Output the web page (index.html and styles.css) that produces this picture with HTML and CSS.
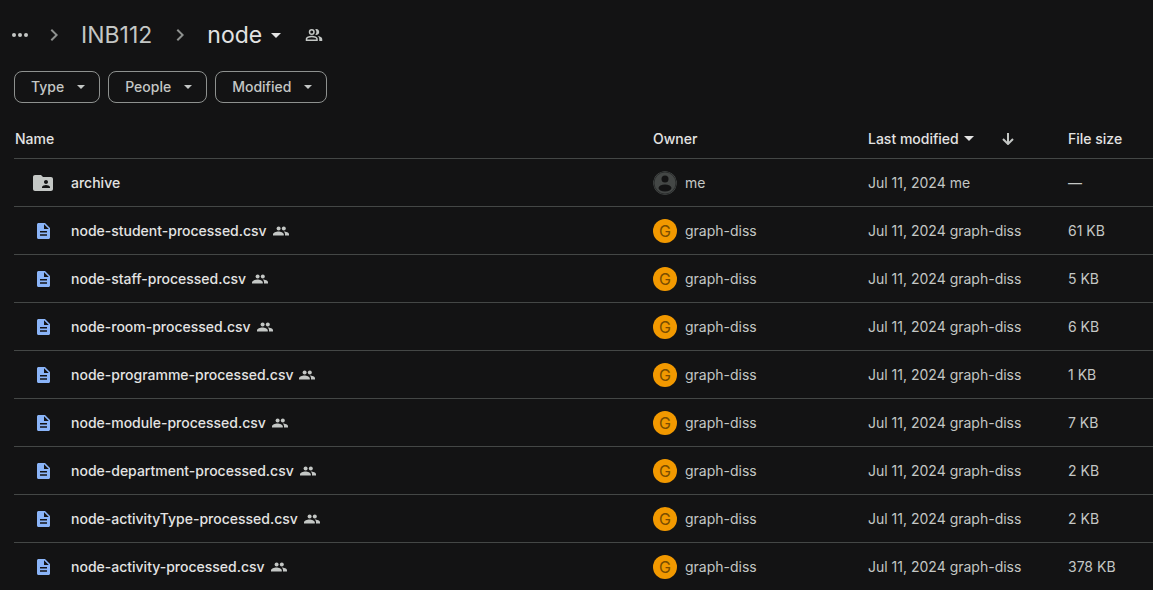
FILE: index.html
```html
<!DOCTYPE html>
<html lang="en">
<head>
<meta charset="utf-8">
<title>node</title>
<link rel="stylesheet" href="styles.css">
</head>
<body>
<svg class="defs" aria-hidden="true">
  <symbol id="chevron" viewBox="0 0 24 24"><path d="M10 6 8.600 7.400 13.200 12l-4.600 4.600L10 18l6-6z"/></symbol>
  <symbol id="caret" viewBox="0 0 10 5"><path d="M0 0h10L5 5z"/></symbol>
  <symbol id="folder" viewBox="0 0 24 24"><path d="M20 6h-8l-2-2H4c-1.100 0-2 .9-2 2v12c0 1.100.9 2 2 2h16c1.100 0 2-.9 2-2V8c0-1.100-.9-2-2-2zm-5 3c1.100 0 2 .9 2 2s-.9 2-2 2-2-.9-2-2 .9-2 2-2zm4 8h-8v-1c0-1.330 2.670-2 4-2s4 .67 4 2v1z"/></symbol>
  <symbol id="doc" viewBox="0 0 13 16"><path fill-rule="evenodd" d="M1.500 0H8l5 5v9.500c0 .8-.7 1.500-1.500 1.500h-10C.7 16 0 15.300 0 14.500v-13C0 .7.700 0 1.500 0zM7 1.200V6h4.800zM3 8v1.500h7V8zm0 3.200v1.500h7v-1.500z"/></symbol>
  <symbol id="people" viewBox="0 0 16 10"><circle cx="5.600" cy="2.500" r="2"/><circle cx="10.800" cy="2.500" r="2"/><path d="M0 9.500V8.300C0 6.600 3.200 5.500 5.400 5.500s5.400 1.100 5.400 2.800v1.200zM12 9.500V8.200c0-1.100-.5-1.900-1.300-2.600 2.300 0 5.300.9 5.300 2.600v1.300z"/></symbol>
</svg>
<main class="drive">
  <nav class="crumbs" aria-label="Folder path">
    <button class="icon-btn more" aria-label="More folders"><svg viewBox="0 0 16 4"><circle cx="2" cy="2" r="2"/><circle cx="8" cy="2" r="2"/><circle cx="14" cy="2" r="2"/></svg></button>
    <svg class="chevron first" aria-hidden="true"><use href="#chevron"/></svg>
    <a class="crumb" href="#">INB112</a>
    <svg class="chevron" aria-hidden="true"><use href="#chevron"/></svg>
    <button class="crumb current">node<svg class="caret" aria-hidden="true"><use href="#caret"/></svg></button>
    <button class="icon-btn share" aria-label="Manage access"><svg viewBox="0 0 24 24"><path fill-rule="evenodd" d="M9 4a4 4 0 1 1 0 8 4 4 0 0 1 0-8zm0 2a2 2 0 1 0 0 4 2 2 0 0 0 0-4zM1 20v-2.800c0-2.800 4.800-4.200 8-4.200s8 1.400 8 4.200V20zm2-2h12v-.8c0-1-3-2.200-6-2.200s-6 1.200-6 2.200zM15 4a4 4 0 1 1-1.300 7.800 6 6 0 0 0 0-7.600c.4-.1.800-.2 1.300-.2zM19 20v-2.800c0-1.500-.8-2.800-2.200-3.800 3 .4 6.200 1.600 6.200 3.800V20z"/></svg></button>
  </nav>
  <div class="chips">
    <button class="chip">Type<svg class="caret small" aria-hidden="true"><use href="#caret"/></svg></button>
    <button class="chip">People<svg class="caret small" aria-hidden="true"><use href="#caret"/></svg></button>
    <button class="chip">Modified<svg class="caret small" aria-hidden="true"><use href="#caret"/></svg></button>
  </div>
  <table class="files">
    <colgroup><col><col class="col-owner"><col class="col-modified"><col class="col-size"></colgroup>
    <thead>
      <tr>
        <th scope="col">Name</th>
        <th scope="col">Owner</th>
        <th scope="col"><div class="sort"><button class="sort-by">Last modified<svg class="caret" aria-hidden="true"><use href="#caret"/></svg></button><button class="icon-btn arrow" aria-label="Reverse sort direction"><svg viewBox="0 0 12 12"><path d="M6 0v11M1 6l5 5 5-5"/></svg></button></div></th>
        <th scope="col">File size</th>
      </tr>
    </thead>
    <tbody>
      <tr>
        <td><div class="name"><span class="kind"><svg class="folder" aria-hidden="true"><use href="#folder"/></svg></span>archive</div></td>
        <td><div class="owner"><svg class="avatar" viewBox="0 0 24 24" aria-hidden="true"><circle class="disc" cx="12" cy="12" r="12"/><circle class="ring" cx="12" cy="12" r="11"/><circle class="cut" cx="12" cy="8" r="3.500"/><ellipse class="cut" cx="12" cy="17" rx="6.500" ry="3.500"/></svg>me</div></td>
        <td>Jul 11, 2024 me</td><td>—</td>
      </tr>
      <tr><td><div class="name"><span class="kind"><svg class="doc"><use href="#doc"/></svg></span>node-student-processed.csv<svg class="people"><use href="#people"/></svg></div></td><td><div class="owner"><span class="avatar letter">G</span>graph-diss</div></td><td>Jul 11, 2024 graph-diss</td><td>61 KB</td></tr>
      <tr><td><div class="name"><span class="kind"><svg class="doc"><use href="#doc"/></svg></span>node-staff-processed.csv<svg class="people"><use href="#people"/></svg></div></td><td><div class="owner"><span class="avatar letter">G</span>graph-diss</div></td><td>Jul 11, 2024 graph-diss</td><td>5 KB</td></tr>
      <tr><td><div class="name"><span class="kind"><svg class="doc"><use href="#doc"/></svg></span>node-room-processed.csv<svg class="people"><use href="#people"/></svg></div></td><td><div class="owner"><span class="avatar letter">G</span>graph-diss</div></td><td>Jul 11, 2024 graph-diss</td><td>6 KB</td></tr>
      <tr><td><div class="name"><span class="kind"><svg class="doc"><use href="#doc"/></svg></span>node-programme-processed.csv<svg class="people"><use href="#people"/></svg></div></td><td><div class="owner"><span class="avatar letter">G</span>graph-diss</div></td><td>Jul 11, 2024 graph-diss</td><td>1 KB</td></tr>
      <tr><td><div class="name"><span class="kind"><svg class="doc"><use href="#doc"/></svg></span>node-module-processed.csv<svg class="people"><use href="#people"/></svg></div></td><td><div class="owner"><span class="avatar letter">G</span>graph-diss</div></td><td>Jul 11, 2024 graph-diss</td><td>7 KB</td></tr>
      <tr><td><div class="name"><span class="kind"><svg class="doc"><use href="#doc"/></svg></span>node-department-processed.csv<svg class="people"><use href="#people"/></svg></div></td><td><div class="owner"><span class="avatar letter">G</span>graph-diss</div></td><td>Jul 11, 2024 graph-diss</td><td>2 KB</td></tr>
      <tr><td><div class="name"><span class="kind"><svg class="doc"><use href="#doc"/></svg></span>node-activityType-processed.csv<svg class="people"><use href="#people"/></svg></div></td><td><div class="owner"><span class="avatar letter">G</span>graph-diss</div></td><td>Jul 11, 2024 graph-diss</td><td>2 KB</td></tr>
      <tr><td><div class="name"><span class="kind"><svg class="doc"><use href="#doc"/></svg></span>node-activity-processed.csv<svg class="people"><use href="#people"/></svg></div></td><td><div class="owner"><span class="avatar letter">G</span>graph-diss</div></td><td>Jul 11, 2024 graph-diss</td><td>378 KB</td></tr>
    </tbody>
  </table>
</main>
</body>
</html>
```
FILE: styles.css
```css
* { box-sizing: border-box; }
body {
  margin: 0;
  background: #131314;
  color: #c4c7c5;
  font: 400 14px/20px Inter, "Open Sans", sans-serif;
}
svg { display: block; flex: none; fill: currentColor; }
button { margin: 0; padding: 0; border: 0; background: none; color: inherit; font: inherit; cursor: pointer; }
.defs { display: none; }
.drive { padding: 15px 0 0 14px; }

.crumbs { display: flex; align-items: center; height: 40px; margin-left: -2px; }
.crumb { display: flex; align-items: center; color: #c4c7c5; font-size: 23px; line-height: 32px; text-decoration: none; }
.current { color: #e3e3e3; gap: 9px; }
.more svg { width: 16px; height: 4px; }
.chevron { width: 24px; height: 24px; margin: 0 15px 0 16px; fill: #8e918f; }
.chevron.first { margin-left: 14px; }
.caret { width: 10px; height: 5px; }
.caret.small { width: 8px; height: 4px; }
.share { margin-left: 24px; }
.share svg { width: 18px; height: 18px; }

.chips { display: flex; gap: 8px; margin-top: 16px; }
.chip {
  display: flex; align-items: center; gap: 13px;
  height: 32px; padding: 0 14px 0 16px;
  border: 1px solid #8e918f; border-radius: 8px;
  font-weight: 500;
}

.files { width: 100%; margin-top: 16px; border-collapse: separate; border-spacing: 0; table-layout: fixed; }
.col-owner { width: 215px; }
.col-modified { width: 200px; }
.col-size { width: 86px; }
.files th, .files td { height: 48px; padding: 0 0 0 1px; border-bottom: 1px solid #444746; text-align: left; white-space: nowrap; }
.files th { height: 40px; color: #e3e3e3; font-weight: 500; }
.files tr:last-child td { height: 47px; border-bottom: 0; }
.name { display: flex; align-items: center; color: #e3e3e3; font-weight: 500; }
.kind { display: flex; justify-content: center; width: 56px; color: #c4c7c5; }
.folder { width: 24px; height: 24px; }
.doc { width: 13px; height: 16px; fill: #8ab4f8; }
.people { width: 16px; height: 10px; margin-left: 6px; fill: #c4c7c5; }
.owner { display: flex; align-items: center; gap: 8px; }
.avatar { width: 24px; height: 24px; border-radius: 50%; }
.disc { fill: #444746; }
.ring { fill: none; stroke: #2a2c2c; }
.cut { fill: #131314; }
.letter { background: #f29900; color: #7a4d00; font-size: 16px; line-height: 24px; text-align: center; }
.sort { display: flex; align-items: center; gap: 28px; }
.sort-by { display: flex; align-items: center; gap: 5px; font-weight: 500; }
.arrow svg { width: 12px; height: 12px; fill: none; stroke: #c4c7c5; stroke-width: 2; }
```
